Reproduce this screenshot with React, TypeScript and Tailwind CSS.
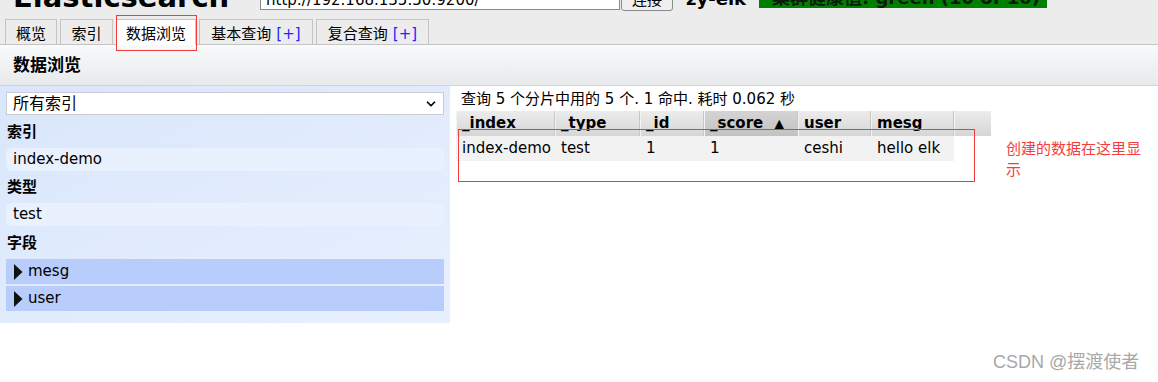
import { ChevronDown } from "lucide-react";

const tabs = [
    { label: "概览", w: "w-[52px]" },
    { label: "索引", w: "w-[53px]" },
    { label: "数据浏览", w: "w-[80px]", active: true },
    { label: "基本查询", w: "w-[114px]", plus: true },
    { label: "复合查询", w: "w-[113px]", plus: true },
];

const cols = [
    { key: "_index", w: "w-[99px]" },
    { key: "_type", w: "w-[85px]" },
    { key: "_id", w: "w-[64px]" },
    { key: "_score", w: "w-[94px]", sorted: true },
    { key: "user", w: "w-[73px]" },
    { key: "mesg", w: "w-[83px]" },
];

const row = ["index-demo", "test", "1", "1", "ceshi", "hello elk"];

function Triangle() {
    return (
        <svg width="10" height="16" viewBox="0 0 10 16" className="shrink-0">
            <polygon points="1,0 9.5,8 1,16" fill="#111" />
        </svg>
    );
}

export default function App() {
    return (
        <div className="relative w-[1158px] h-[382px] overflow-hidden bg-white text-black font-['DejaVu_Sans','Noto_Sans_CJK_SC',sans-serif]">
            {/* top bar */}
            <div className="bg-[#ececec] border-b border-[#c4c4c4]">
                <div className="flex items-end h-[19px] overflow-hidden">
                    <span className="ml-[13px] w-[247px] text-[29px] leading-[29px] font-bold mb-[7px] whitespace-nowrap">Elasticsearch</span>
                    <div className="w-[360px] h-[30px] mb-[9px] bg-white border border-[#8a8a8a] px-[5px] pb-[1px] flex items-end text-[15px] leading-[15px] whitespace-nowrap">
                        http://192.168.135.50:9200/
                    </div>
                    <div className="ml-[1px] w-[52px] h-[30px] mb-[8px] bg-[#efefef] border border-[#8a8a8a] rounded-[3px] flex items-end justify-center pb-[1px] text-[15px] leading-[17px]">
                        连接
                    </div>
                    <span className="ml-[13px] w-[73px] text-[18px] leading-[22px] font-bold mb-[9px]">zy-elk</span>
                    <div className="w-[288px] h-[30px] mb-[11px] bg-[#008000] pl-[13px] pb-[1px] flex items-end text-[18px] leading-[18px] font-bold text-[#0b1a0b] whitespace-nowrap">
                        集群健康值: green (10 of 10)
                    </div>
                </div>
                <div className="flex items-end gap-[3px] pl-[5px] h-[26px] -mb-px">
                    {tabs.map((t) => (
                        <div
                            key={t.label}
                            className={`${t.w} h-[26px] border border-[#c4c4c4] pt-[3px] text-[15px] leading-[22px] text-center whitespace-nowrap ${
                                t.active ? "bg-white border-b-white" : "bg-[#ececec]"
                            }`}
                        >
                            {t.label}
                            {t.plus && <span className="text-[#2424ff] ml-[5px]">[+]</span>}
                        </div>
                    ))}
                </div>
            </div>

            {/* section title */}
            <div className="h-[41px] bg-linear-to-b from-[#f9fafb] to-[#e7e9eb] border-b border-[#d2d4d6] flex items-center pl-[13px] pt-[1px] text-[17px] font-bold">
                数据浏览
            </div>

            <div className="flex items-start">
                {/* sidebar */}
                <div className="w-[450px] bg-linear-to-br from-[#d9e6fb] to-[#e8f0fe] px-[6px] pt-[6px] pb-[12px]">
                    <div className="h-[23px] bg-white border border-[#c9ccd2] flex items-center justify-between pl-[6px] pr-[5px] text-[16px]">
                        <span>所有索引</span>
                        <ChevronDown size={14} strokeWidth={3} />
                    </div>
                    <div className="h-[33px] flex items-center pl-px pt-[1px] text-[15px] font-bold">索引</div>
                    <div className="h-[23px] rounded-[6px] bg-[#e9f1fe] pl-[7px] flex items-center text-[15px]">index-demo</div>
                    <div className="h-[32px] flex items-center pl-px pt-[1px] text-[15px] font-bold">类型</div>
                    <div className="h-[23px] rounded-[6px] bg-[#e9f1fe] pl-[7px] flex items-center text-[15px]">test</div>
                    <div className="h-[33px] flex items-center pl-px pt-[1px] text-[15px] font-bold">字段</div>
                    <div className="flex flex-col gap-[2px]">
                        {["mesg", "user"].map((f) => (
                            <div key={f} className="h-[25px] bg-[#b8cdfc] flex items-center gap-[5px] pl-[7px] text-[15px]">
                                <Triangle />
                                {f}
                            </div>
                        ))}
                    </div>
                </div>

                {/* results */}
                <div className="ml-[6px] pt-[2px]">
                    <div className="h-[23px] leading-[23px] pl-[5px] text-[15px] whitespace-nowrap">
                        查询 5 个分片中用的 5 个. 1 命中. 耗时 0.062 秒
                    </div>
                    <div className="flex h-[25px]">
                        {cols.map((c) => (
                            <div
                                key={c.key}
                                className={`${c.w} border-l border-[#f3f3f3] border-r border-r-[#c6c6c6] pl-[5px] flex items-center text-[15px] font-bold whitespace-nowrap ${
                                    c.sorted ? "bg-linear-to-b from-[#d4d4d4] to-[#c2c2c2]" : "bg-linear-to-b from-[#ececec] to-[#d6d6d6]"
                                }`}
                            >
                                {c.key}
                                {c.sorted && <span className="ml-[11px] text-[13px]">▲</span>}
                            </div>
                        ))}
                        <div className="w-[37px] border-l border-[#f3f3f3] bg-linear-to-b from-[#ececec] to-[#d6d6d6]" />
                    </div>
                    <div className="flex h-[25px]">
                        {row.map((v, i) => (
                            <div key={i} className={`${cols[i].w} bg-[#f2f2f2] pl-[6px] flex items-center text-[15px] whitespace-nowrap`}>
                                {v}
                            </div>
                        ))}
                    </div>
                </div>
            </div>

            {/* annotations */}
            <div className="absolute left-[116px] top-[15px] w-[81px] h-[36px] border border-[#f23b3b]" />
            <div className="absolute left-[458px] top-[129px] w-[517px] h-[53px] border border-[#f23b3b]" />
            <div className="absolute left-[1006px] top-[137px] w-[140px] text-[15px] leading-[21px] text-[#f53d3d] font-['Noto_Sans_CJK_SC',sans-serif]">
                创建的数据在这里显示
            </div>
            <div className="absolute left-[993px] top-[350px] text-[18px] leading-[24px] text-[#a8a8a8] font-['Liberation_Sans','Noto_Sans_CJK_SC',sans-serif] whitespace-nowrap">
                CSDN @摆渡使者
            </div>
        </div>
    );
}
